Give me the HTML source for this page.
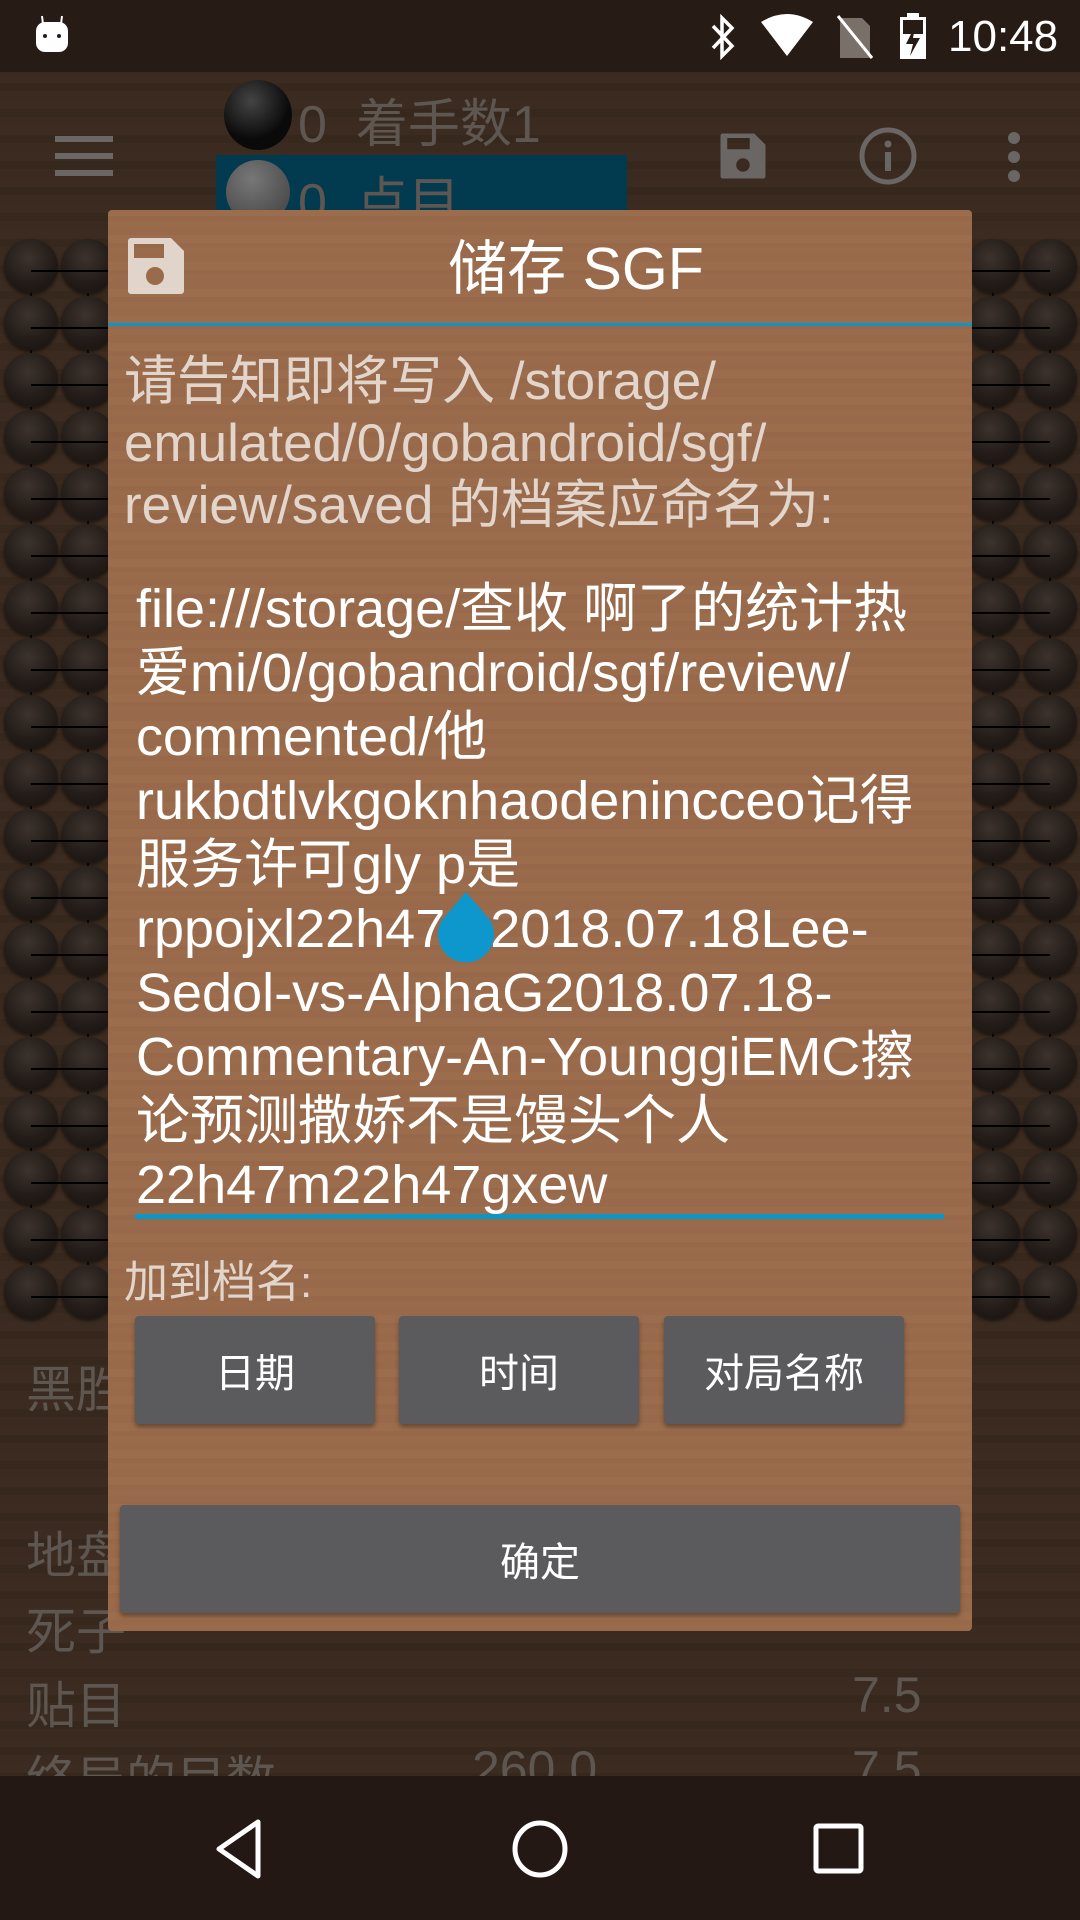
<!DOCTYPE html>
<html><head><meta charset="utf-8"><style>
*{margin:0;padding:0;box-sizing:border-box}
body{width:1080px;height:1920px;overflow:hidden;position:relative;font-family:"Liberation Sans","Noto Sans CJK SC",sans-serif;
background:repeating-linear-gradient(0deg,#3a2a1f 0 9px,#37281d 9px 17px,#3c2b20 17px 26px);}
.abs{position:absolute}
.status{left:0;top:0;width:1080px;height:72px;background:#261b15}
.nav{left:0;top:1776px;width:1080px;height:144px;background:#231813}
.stone{position:absolute;width:54px;height:54px;border-radius:50%;background:radial-gradient(circle at 45% 35%,#3d332d,#231c18 55%,#161110);box-shadow:0 2px 3px rgba(0,0,0,.5)}
.gray{color:#5e5650;font-size:50px}
.dlg{left:108px;top:210px;width:864px;height:1421px;border-radius:4px;
background:repeating-linear-gradient(0deg,#9a6b4b 0 6px,#97694a 6px 11px,#9c6d4d 11px 19px,#98694a 19px 27px);}
.btn{position:absolute;background:#5b5a5c;border-radius:4px;color:#fff;font-size:40px;display:flex;align-items:center;justify-content:center;box-shadow:0 3px 5px rgba(0,0,0,.35)}
</style></head><body>
<div class="abs status"></div>
<svg class="abs" style="left:34px;top:14px" width="40" height="40" viewBox="0 0 40 40"><rect x="2" y="8" width="32" height="30" rx="9" fill="#fff"/><line x1="8" y1="2" x2="9" y2="10" stroke="#fff" stroke-width="2"/><line x1="28" y1="2" x2="27" y2="10" stroke="#fff" stroke-width="2"/><circle cx="11" cy="22" r="2" fill="#261b15"/><circle cx="25" cy="22" r="2" fill="#261b15"/></svg>
<svg class="abs" style="left:708px;top:14px" width="30" height="46" viewBox="0 0 30 46"><path d="M5 12 L24 32 L14 42 L14 4 L24 14 L5 34" fill="none" stroke="#fff" stroke-width="3.5"/></svg>
<svg class="abs" style="left:760px;top:14px" width="54" height="44" viewBox="0 0 54 44"><path d="M1 8 Q27 -8 53 8 L27 42 Z" fill="#fff"/></svg>
<svg class="abs" style="left:834px;top:14px" width="40" height="46" viewBox="0 0 40 46"><path d="M6 4 H28 L36 12 V44 H6 Z" fill="#7a706a"/><line x1="4" y1="2" x2="38" y2="44" stroke="#fff" stroke-width="3"/></svg>
<svg class="abs" style="left:898px;top:12px" width="30" height="48" viewBox="0 0 30 48"><rect x="9" y="1" width="12" height="5" fill="#fff"/><rect x="2" y="5" width="26" height="42" fill="#fff"/><rect x="5" y="8" width="20" height="14" fill="#261b15"/><path d="M17 14 L8 32 H15 L12 44 L22 26 H15 Z" fill="#261b15"/></svg>
<div class="abs" style="left:948px;top:12px;color:#fff;font-size:44px">10:48</div>

<svg class="abs" style="left:55px;top:136px" width="58" height="40"><rect y="0" width="58" height="6" fill="#6a6663"/><rect y="17" width="58" height="6" fill="#6a6663"/><rect y="34" width="58" height="6" fill="#6a6663"/></svg>
<div class="abs" style="left:216px;top:155px;width:411px;height:58px;background:#023a50"></div>
<div class="abs" style="left:224px;top:80px;width:68px;height:70px;border-radius:50%;background:radial-gradient(circle at 40% 30%,#444,#0a0a0a 60%)"></div>
<div class="abs" style="left:226px;top:160px;width:64px;height:64px;border-radius:50%;background:radial-gradient(circle at 40% 30%,#777,#4e4e4e 70%)"></div>
<div class="abs gray" style="left:298px;top:82px;font-size:52px">0&nbsp; 着手数1</div>
<div class="abs gray" style="left:298px;top:160px;font-size:52px">0&nbsp; 点目</div>
<svg class="abs" style="left:716px;top:128px" width="54" height="56" viewBox="0 0 24 24"><path d="M3 2 H17 L22 7 V21 a1 1 0 0 1-1 1 H3 a1 1 0 0 1-1-1 V3 a1 1 0 0 1 1-1Z M5 4 V9 H15 V4Z" fill="#6a6663" fill-rule="evenodd"/><circle cx="12" cy="16" r="3" fill="#3a2a1f"/></svg>
<svg class="abs" style="left:858px;top:126px" width="60" height="60" viewBox="0 0 60 60"><circle cx="30" cy="30" r="26" fill="none" stroke="#6a6663" stroke-width="5"/><rect x="27" y="26" width="6" height="19" fill="#6a6663"/><circle cx="30" cy="18" r="3.5" fill="#6a6663"/></svg>
<svg class="abs" style="left:1004px;top:132px" width="20" height="50"><circle cx="10" cy="6" r="6" fill="#6a6663"/><circle cx="10" cy="25" r="6" fill="#6a6663"/><circle cx="10" cy="44" r="6" fill="#6a6663"/></svg>

<svg class="abs" style="left:0;top:0" width="1080" height="1320">
<g stroke="#000" stroke-width="1.5">
<line x1="31" y1="270" x2="31" y2="1296"/><line x1="88" y1="270" x2="88" y2="1296"/><line x1="993" y1="270" x2="993" y2="1296"/><line x1="1050" y1="270" x2="1050" y2="1296"/>
</g></svg>
<div id="board"></div>
<script>
var s='',g='';
for(var r=0;r<19;r++){var y=270+r*57;
g+='<div class="abs" style="left:31px;top:'+y+'px;width:1019px;height:1.5px;background:#000"></div>';
[31,88,993,1050].forEach(function(x){s+='<div class="stone" style="left:'+(x-27)+'px;top:'+(y-31)+'px"></div>';});}
document.getElementById('board').innerHTML=s+g;
</script>
<div class="abs gray" style="left:26px;top:1350px">黑胜</div>
<div class="abs gray" style="left:26px;top:1516px">地盘</div>
<div class="abs gray" style="left:26px;top:1592px">死子</div>
<div class="abs gray" style="left:26px;top:1666px">贴目</div>
<div class="abs gray" style="left:852px;top:1666px">7.5</div>
<div class="abs gray" style="left:26px;top:1740px">终局的目数</div>
<div class="abs gray" style="left:472px;top:1740px">260.0</div>
<div class="abs gray" style="left:852px;top:1740px">7.5</div>

<div class="abs nav"></div>
<svg class="abs" style="left:214px;top:1818px" width="50" height="62"><path d="M44 4 V58 L5 31 Z" fill="none" stroke="#fff" stroke-width="5" stroke-linejoin="round"/></svg>
<svg class="abs" style="left:510px;top:1818px" width="60" height="62"><ellipse cx="30" cy="31" rx="25" ry="26" fill="none" stroke="#fff" stroke-width="5"/></svg>
<svg class="abs" style="left:812px;top:1822px" width="56" height="56"><rect x="4" y="4" width="45" height="45" rx="2" fill="none" stroke="#fff" stroke-width="5"/></svg>

<div class="abs dlg">
<svg class="abs" style="left:20px;top:28px" width="56" height="56" viewBox="0 0 56 56"><path d="M3 0 H43 L56 13 V53 a3 3 0 0 1-3 3 H3 a3 3 0 0 1-3-3 V3 a3 3 0 0 1 3-3Z M6 6 V20 H36 V6Z" fill="#e0d4cb" fill-rule="evenodd"/><circle cx="27" cy="38" r="9" fill="#9a6b4b"/></svg>
<div class="abs" style="left:72px;width:792px;top:22px;text-align:center;color:#fff;font-size:59px;line-height:74px">储存 SGF</div>
<div class="abs" style="left:0;top:113px;width:864px;height:3px;background:#0a96c6"></div>
<div class="abs" style="left:16px;top:141px;color:#e2d5cc;font-size:53px;line-height:62px;white-space:nowrap">请告知即将写入 /storage/<br>emulated/0/gobandroid/sgf/<br>review/saved 的档案应命名为:</div>
<div class="abs" style="left:28px;top:367px;color:#fff;font-size:54px;line-height:64px;white-space:nowrap">file:///storage/查收 啊了的统计热<br>爱mi/0/gobandroid/sgf/review/<br>commented/他<br>rukbdtlvkgoknhaodenincceo记得<br>服务许可gly p是<br>rppojxl22h47m2018.07.18Lee-<br>Sedol-vs-AlphaG2018.07.18-<br>Commentary-An-YounggiEMC擦<br>论预测撒娇不是馒头个人<br>22h47m22h47gxew</div>
<div class="abs" style="left:27px;top:1004px;width:809px;height:5px;background:#0a96c6"></div>
<svg class="abs" style="left:326px;top:680px" width="64" height="76" viewBox="0 0 64 76"><path d="M32 2 L56 30 A28 28 0 1 1 8 30 Z" fill="#0e97cc"/></svg>
<div class="abs" style="left:16px;top:1036px;color:#e2d5cc;font-size:44px">加到档名:</div>
<div class="btn" style="left:27px;top:1106px;width:240px;height:108px">日期</div>
<div class="btn" style="left:291px;top:1106px;width:240px;height:108px">时间</div>
<div class="btn" style="left:556px;top:1106px;width:240px;height:108px">对局名称</div>
<div class="btn" style="left:12px;top:1295px;width:840px;height:108px">确定</div>
</div>
</body></html>
